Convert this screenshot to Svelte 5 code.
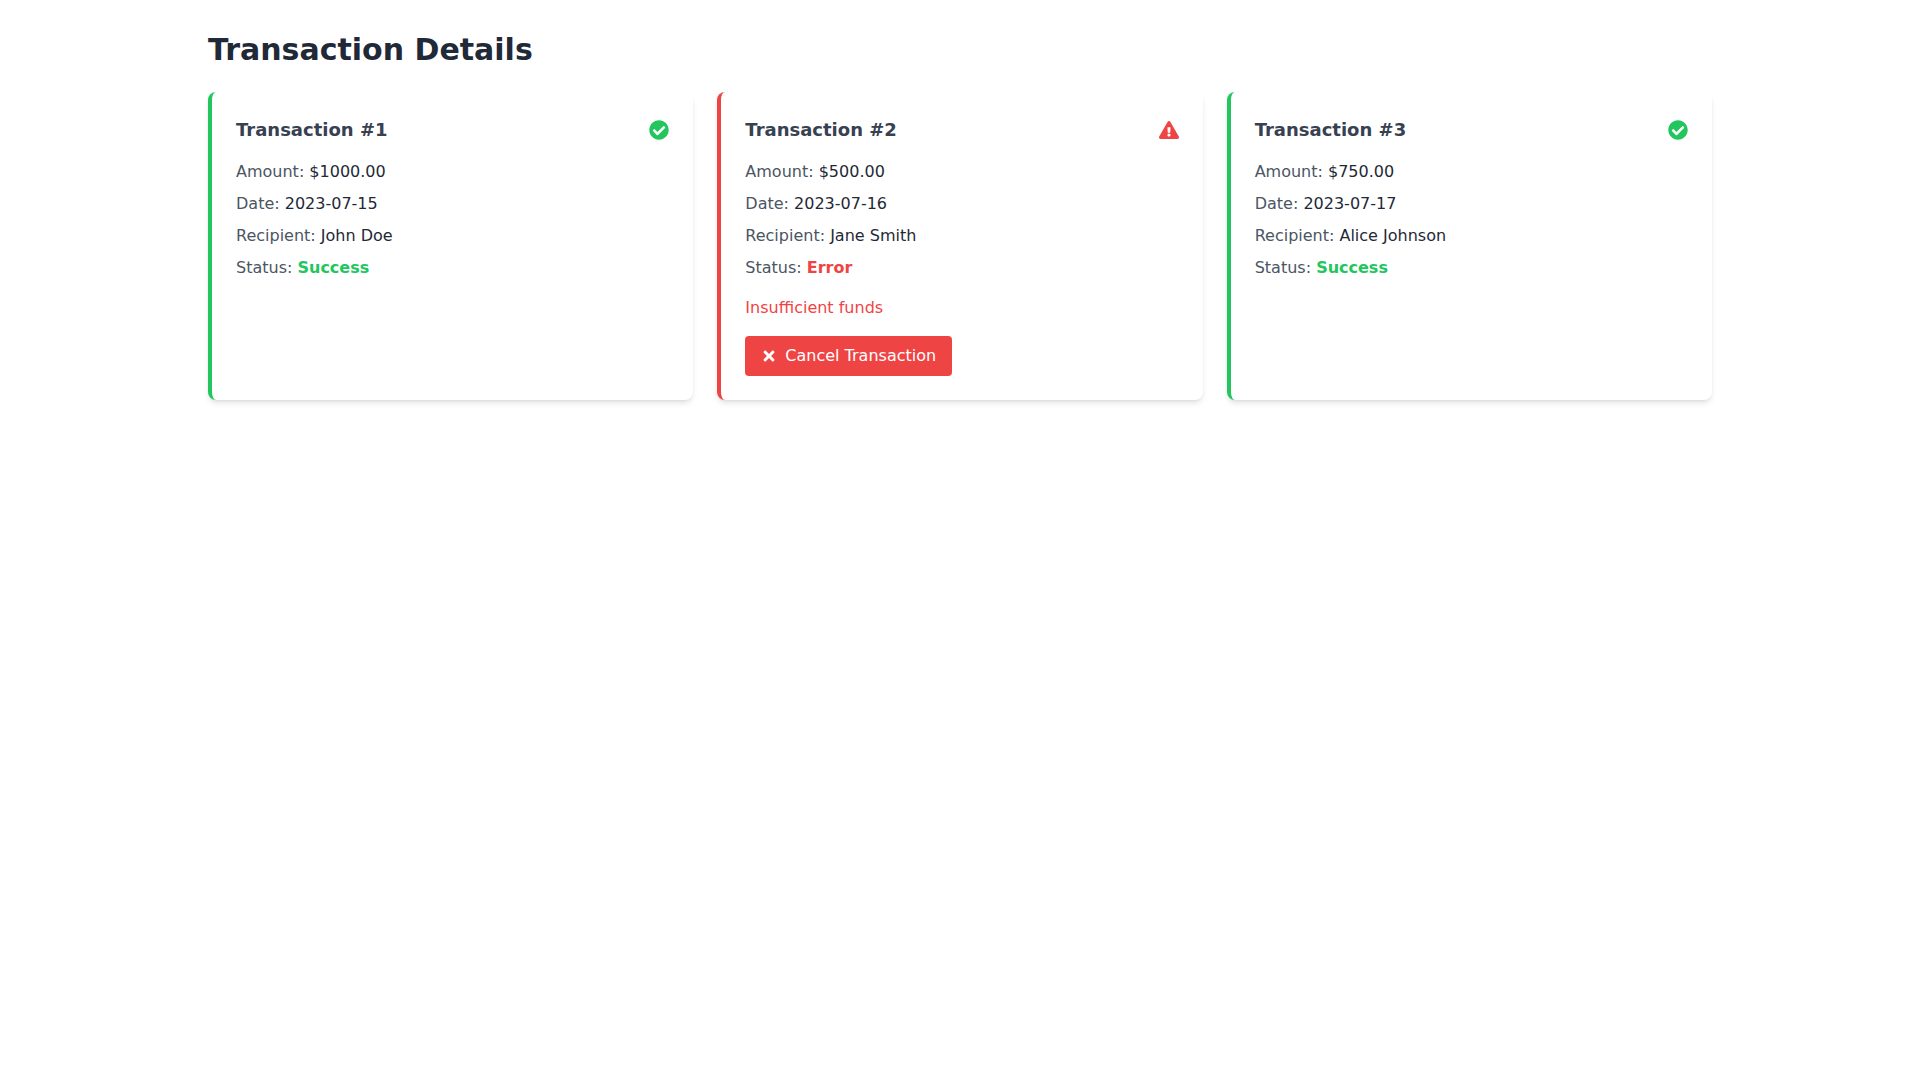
<script>
  const transactions = [
    { id: 1, amount: "$1000.00", date: "2023-07-15", recipient: "John Doe", status: "Success" },
    { id: 2, amount: "$500.00", date: "2023-07-16", recipient: "Jane Smith", status: "Error", message: "Insufficient funds" },
    { id: 3, amount: "$750.00", date: "2023-07-17", recipient: "Alice Johnson", status: "Success" }
  ];
</script>

<main class="page">
  <h1>Transaction Details</h1>
  <div class="cards">
    {#each transactions as t}
      <section class="card" class:error={t.status === "Error"}>
        <div class="head">
          <h2>Transaction #{t.id}</h2>
          {#if t.status === "Error"}
            <svg class="icon red" viewBox="0 0 576 512" fill="currentColor">
              <path d="M569.517 440.013C587.975 472.007 564.806 512 527.94 512H48.054c-36.937 0-59.999-40.055-41.577-71.987L246.423 23.985c18.467-32.009 64.72-31.951 83.154 0l239.94 416.028zM288 354c-25.405 0-46 20.595-46 46s20.595 46 46 46 46-20.595 46-46-20.595-46-46-46zm-43.673-165.346l7.418 136c.347 6.364 5.609 11.346 11.982 11.346h48.546c6.373 0 11.635-4.982 11.982-11.346l7.418-136c.375-6.874-5.098-12.654-11.982-12.654h-63.383c-6.884 0-12.356 5.78-11.981 12.654z"/>
            </svg>
          {:else}
            <svg class="icon green" viewBox="0 0 512 512" fill="currentColor">
              <path d="M504 256c0 136.967-111.033 248-248 248S8 392.967 8 256 119.033 8 256 8s248 111.033 248 248zM227.314 387.314l184-184c6.248-6.248 6.248-16.379 0-22.627l-22.627-22.627c-6.248-6.249-16.379-6.249-22.628 0L216 308.118l-70.059-70.059c-6.248-6.248-16.379-6.248-22.628 0l-22.627 22.627c-6.248 6.248-6.248 16.379 0 22.627l104 104c6.249 6.249 16.379 6.249 22.628.001z"/>
            </svg>
          {/if}
        </div>
        <div class="rows">
          <p><span class="label">Amount:</span> {t.amount}</p>
          <p><span class="label">Date:</span> {t.date}</p>
          <p><span class="label">Recipient:</span> {t.recipient}</p>
          <p>
            <span class="label">Status:</span>
            <strong class={t.status === "Error" ? "red" : "green"}>{t.status}</strong>
          </p>
        </div>
        {#if t.message}
          <p class="message">{t.message}</p>
          <button type="button">
            <svg class="times" viewBox="0 0 352 512" fill="currentColor">
              <path d="M242.72 256l100.07-100.07c12.28-12.28 12.28-32.19 0-44.48l-22.24-22.24c-12.28-12.28-32.19-12.28-44.48 0L176 189.28 75.93 89.21c-12.28-12.28-32.19-12.28-44.48 0L9.21 111.45c-12.28 12.28-12.28 32.19 0 44.48L109.28 256 9.21 356.07c-12.28 12.28-12.28 32.19 0 44.48l22.24 22.24c12.28 12.28 32.2 12.28 44.48 0L176 322.72l100.07 100.07c12.28 12.28 32.2 12.28 44.48 0l22.24-22.24c12.28-12.28 12.28-32.19 0-44.48L242.72 256z"/>
            </svg>
            Cancel Transaction
          </button>
        {/if}
      </section>
    {/each}
  </div>
</main>

<style>
  :global(body) {
    margin: 0;
    background: #fff;
    font-family: "DejaVu Sans", sans-serif;
    font-size: 16px;
    line-height: 24px;
    color: #1f2937;
  }

  .page {
    box-sizing: border-box;
    max-width: 1536px;
    margin: 0 auto;
    padding: 32px 16px;
  }

  h1 {
    margin: 0 0 24px;
    font-size: 30px;
    line-height: 36px;
    font-weight: 700;
    color: #1f2937;
  }

  .cards {
    display: grid;
    grid-template-columns: repeat(3, 1fr);
    gap: 24px;
  }

  .card {
    padding: 24px;
    background: #fff;
    border-left: 4px solid #22c55e;
    border-radius: 8px;
    box-shadow: 0 4px 6px -1px rgba(0, 0, 0, 0.1), 0 2px 4px -2px rgba(0, 0, 0, 0.1);
  }

  .card.error {
    border-left-color: #ef4444;
  }

  .head {
    display: flex;
    align-items: center;
    justify-content: space-between;
    margin-bottom: 16px;
  }

  h2 {
    margin: 0;
    font-size: 18px;
    line-height: 28px;
    font-weight: 700;
    color: #374151;
  }

  .icon {
    width: 20px;
    height: 20px;
  }

  .rows {
    display: flex;
    flex-direction: column;
    gap: 8px;
  }

  p {
    margin: 0;
  }

  .label {
    color: #4b5563;
  }

  .green {
    color: #22c55e;
  }

  .red {
    color: #ef4444;
  }

  strong {
    font-weight: 700;
  }

  .message {
    margin-top: 16px;
    color: #ef4444;
  }

  button {
    display: flex;
    align-items: center;
    margin-top: 16px;
    padding: 8px 16px;
    border: 0;
    border-radius: 4px;
    background: #ef4444;
    color: #fff;
    font: inherit;
  }

  .times {
    width: 16px;
    height: 16px;
    margin-right: 8px;
  }
</style>
